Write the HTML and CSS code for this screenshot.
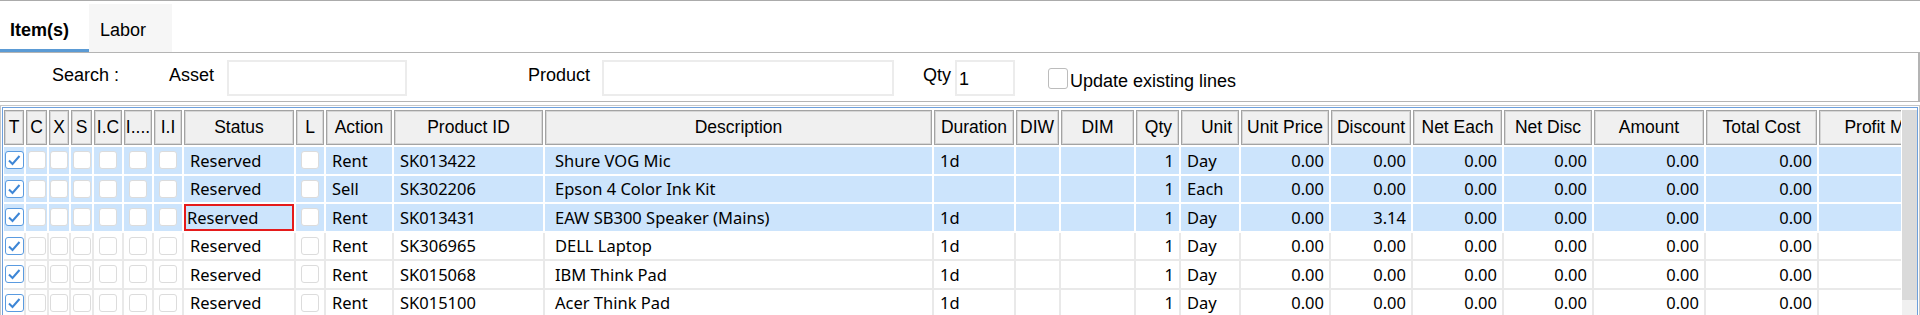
FILE: index.html
```html
<!DOCTYPE html>
<html lang="en">
<head>
    <meta charset="UTF-8">
    <title>Items</title>
    <link rel="stylesheet" href="styles.css">
</head>
<body>
    <div class="tabs">
        <div class="tab active">Item(s)</div>
        <div class="tab labor">Labor</div>
    </div>

    <div class="search">
        <span class="lbl lbl-search">Search :</span>
        <span class="lbl lbl-asset">Asset</span>
        <div class="field field-asset"></div>
        <span class="lbl lbl-product">Product</span>
        <div class="field field-product"></div>
        <span class="lbl lbl-qty">Qty</span>
        <div class="field field-qty">1</div>
        <span class="check"></span>
        <span class="check-label">Update existing lines</span>
    </div>

    <div class="grid-frame">
        <div class="grid">
            <div class="table" id="table">
                <div class="row head">
                    <div class="h">T</div>
                    <div class="h">C</div>
                    <div class="h">X</div>
                    <div class="h">S</div>
                    <div class="h">I.C</div>
                    <div class="h">I....</div>
                    <div class="h">I.I</div>
                    <div class="h">Status</div>
                    <div class="h">L</div>
                    <div class="h">Action</div>
                    <div class="h">Product ID</div>
                    <div class="h">Description</div>
                    <div class="h">Duration</div>
                    <div class="h left">DIW</div>
                    <div class="h">DIM</div>
                    <div class="h right">Qty</div>
                    <div class="h right">Unit</div>
                    <div class="h">Unit Price</div>
                    <div class="h">Discount</div>
                    <div class="h">Net Each</div>
                    <div class="h">Net Disc</div>
                    <div class="h">Amount</div>
                    <div class="h">Total Cost</div>
                    <div class="h">Profit Margin</div>
                </div>
            </div>
            <div class="scrollbar"><div class="thumb"></div></div>
        </div>
    </div>

    <script>
        // rows of the item grid: action, product id, description, duration, unit, discount, selected
        const rows = [
            ['Rent', 'SK013422', 'Shure VOG Mic', '1d', 'Day', '0.00', true],
            ['Sell', 'SK302206', 'Epson 4 Color Ink Kit', '', 'Each', '0.00', true],
            ['Rent', 'SK013431', 'EAW SB300 Speaker (Mains)', '1d', 'Day', '3.14', true],
            ['Rent', 'SK306965', 'DELL Laptop', '1d', 'Day', '0.00', false],
            ['Rent', 'SK015068', 'IBM Think Pad', '1d', 'Day', '0.00', false],
            ['Rent', 'SK015100', 'Acer Think Pad', '1d', 'Day', '0.00', false]
        ];

        const tick = '<svg width="16" height="16" viewBox="0 0 16 16"><polyline points="3,8.5 6.5,12 13.5,4" fill="none" stroke="#3d86d6" stroke-width="2"/></svg>';
        const box = '<div class="c"><span class="box"></span></div>';
        const table = document.getElementById('table');

        rows.forEach((r, i) => {
            const row = document.createElement('div');
            row.className = r[6] ? 'row sel' : 'row';
            const status = i === 2 ? '<div class="c edit">Reserved</div>' : '<div class="c">Reserved</div>';
            row.innerHTML =
                '<div class="c"><span class="box on">' + tick + '</span></div>' +
                box.repeat(6) +
                status +
                box +
                '<div class="c">' + r[0] + '</div>' +
                '<div class="c">' + r[1] + '</div>' +
                '<div class="c desc">' + r[2] + '</div>' +
                '<div class="c">' + r[3] + '</div>' +
                '<div class="c"></div><div class="c"></div>' +
                '<div class="c num">1</div>' +
                '<div class="c">' + r[4] + '</div>' +
                '<div class="c num">0.00</div>' +
                '<div class="c num">' + r[5] + '</div>' +
                '<div class="c num">0.00</div>'.repeat(4) +
                '<div class="c"></div>';
            table.appendChild(row);
        });
    </script>
</body>
</html>
```

FILE: styles.css
```css
* {
    box-sizing: border-box;
}

html, body {
    margin: 0;
    height: 315px;
    overflow: hidden;
    background-color: #fff;
}

body {
    font-family: "Liberation Sans", Arial, sans-serif;
    color: #000;
    border-top: 1px solid #ababab;
}

/* tabs */
.tabs {
    display: flex;
    height: 51px;
    padding-top: 3px;
}

.tab {
    height: 48px;
    padding: 16px 0 0 10px;
    font-size: 18px;
    line-height: 21px;
}

.tab.active {
    width: 89px;
    font-weight: bold;
    border-bottom: 3px solid #5b9bd5;
}

.tab.labor {
    width: 83px;
    padding-left: 11px;
    background-color: #f6f6f6;
}

/* search bar */
.search {
    display: flex;
    align-items: flex-start;
    height: 50px;
    border: 1px solid #b4b4b4;
    border-left: none;
    border-right-width: 2px;
    font-size: 18px;
}

.lbl {
    margin-top: 11px;
    line-height: 22px;
}

.lbl-search {
    margin-left: 52px;
    width: 117px;
}

.lbl-asset {
    width: 58px;
}

.lbl-product {
    margin-left: 121px;
    width: 74px;
}

.lbl-qty {
    margin-left: 29px;
    width: 32px;
}

.field {
    margin-top: 7px;
    height: 36px;
    border: 2px solid #ececec;
    background-color: #fff;
    padding: 7px 0 0 2px;
    line-height: 20px;
}

.field-asset {
    width: 180px;
}

.field-product {
    width: 292px;
}

.field-qty {
    width: 60px;
}

.check {
    margin: 15px 0 0 33px;
    width: 20px;
    height: 21px;
    border: 1px solid #bcbcbc;
    border-radius: 3px;
}

.check-label {
    margin: 17px 0 0 2px;
    line-height: 22px;
}

/* grid */
.grid-frame {
    margin-top: 3px;
    border: 1px solid #c6c6c6;
    border-bottom: none;
    padding: 1px 1px 0 1px;
}

.grid {
    display: flex;
    border: 1px solid #6ea0dc;
    border-bottom: none;
    padding: 2px 0 0 1px;
    height: 220px;
}

.table {
    flex: 1;
    overflow: hidden;
}

.row {
    display: grid;
    grid-template-columns: 20px 21px 20px 21px 28px 28px 28px 110px 28px 66px 149px 387px 80px 43px 73px 43px 58px 88px 80px 89px 88px 110px 111px 150px;
    column-gap: 2px;
    width: max-content;
    padding-bottom: 2px;
    background-color: #e9e9e9;
}

.row.head {
    background-color: #fff;
}

.row.sel {
    background-color: #fff;
}

.h {
    height: 35px;
    display: flex;
    align-items: center;
    justify-content: center;
    white-space: nowrap;
    overflow: hidden;
    font-size: 17.5px;
    background-color: #f0f0f0;
    border: 1px solid #a3a3a3;
    box-shadow: inset 0 0 0 1px #d6d6d6;
}

.h.left {
    justify-content: flex-start;
    padding-left: 3px;
}

.h.right {
    justify-content: flex-end;
    padding-right: 6px;
}

.c {
    height: 26.5px;
    display: flex;
    align-items: center;
    padding: 0 6px;
    white-space: nowrap;
    overflow: hidden;
    font-family: "Noto Sans", sans-serif;
    font-size: 16.5px;
    background-color: #fff;
}

.row.sel .c {
    background-color: #cce4fc;
}

.c.desc {
    padding-left: 10px;
}

.c.num {
    justify-content: flex-end;
    padding-right: 5px;
}

.c.edit {
    padding-left: 3px;
    box-shadow: inset 0 0 0 2px #e51b1b;
}

.box {
    width: 18px;
    height: 18px;
    margin: 0 auto;
    flex: none;
    background-color: #fff;
    border: 1px solid #dcdcdc;
    border-radius: 3px;
    display: flex;
    align-items: center;
    justify-content: center;
}

.row .c:first-child {
    padding: 0;
}

.c:has(.box) {
    padding: 0;
}

.box.on {
    width: 19px;
    border-color: #5a9be0;
}

.scrollbar {
    width: 15px;
    margin-left: 1px;
    background-color: #f0f0f0;
}

.thumb {
    height: 190px;
    background-color: #dadada;
}
```
